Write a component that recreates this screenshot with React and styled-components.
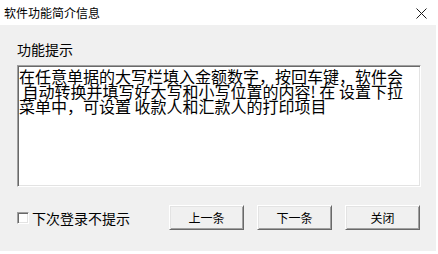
import React from 'react';
import styled, { createGlobalStyle } from 'styled-components';

const GlobalStyle = createGlobalStyle`
  html, body {
    margin: 0;
    padding: 0;
    background: #ffffff;
  }
  body {
    font-family: "Noto Sans CJK SC", "Noto Sans", sans-serif;
    color: #000;
  }
`;

const Window = styled.div`
  width: 436px;
  height: 251px;
  display: flex;
  flex-direction: column;
  background: #f0f0f0;
`;

const TitleBar = styled.div`
  height: 25px;
  flex: none;
  display: flex;
  align-items: center;
  justify-content: space-between;
  padding: 0 9px 0 4px;
  background: #ffffff;
`;

const Title = styled.span`
  font-size: 12px;
  line-height: 14px;
  margin-top: 1px;
`;

const CloseIcon = styled.svg`
  width: 11px;
  height: 11px;
  margin-top: 2px;
`;

const Body = styled.div`
  flex: 1;
  display: flex;
  flex-direction: column;
  padding: 16px 15px 0 17px;
`;

const Label = styled.div`
  font-size: 14px;
  line-height: 16px;
  margin-bottom: 8px;
`;

const TextBox = styled.div`
  height: 122px;
  box-sizing: border-box;
  background: #ffffff;
  border: 1px solid;
  border-color: #a0a0a0 #ffffff #ffffff #a0a0a0;
  box-shadow: inset 1px 1px #696969, inset -1px -1px #e3e3e3;
  padding: 3px 0 0 1px;
  overflow: hidden;
`;

const Line = styled.div`
  font-size: 16px;
  line-height: 15px;
  white-space: pre;
`;

const Footer = styled.div`
  display: flex;
  align-items: center;
  margin-top: 18px;
`;

const CheckRow = styled.label`
  display: flex;
  align-items: center;
  gap: 3px;
  font-size: 14px;
  line-height: 16px;
`;

const CheckBox = styled.span`
  width: 12px;
  height: 12px;
  box-sizing: border-box;
  background: #ffffff;
  border: 1px solid;
  border-color: #a0a0a0 #ffffff #ffffff #a0a0a0;
  box-shadow: inset 1px 1px #696969, inset -1px -1px #e3e3e3;
`;

const Buttons = styled.div`
  margin-left: auto;
  margin-right: 1px;
  display: flex;
  gap: 13px;
`;

const Button = styled.button`
  width: 75px;
  height: 25px;
  box-sizing: border-box;
  padding: 0;
  font-family: inherit;
  font-size: 12px;
  color: #000;
  background: #f0f0f0;
  border: 1px solid;
  border-color: #ffffff #696969 #696969 #ffffff;
  box-shadow: inset 1px 1px #e3e3e3, inset -1px -1px #a0a0a0;
  border-radius: 0;
`;

const lines = [
  '在任意单据的大写栏填入金额数字，按回车键，软件会',
  ' 自动转换并填写好大写和小写位置的内容! 在 设置下拉',
  '菜单中，可设置 收款人和汇款人的打印项目',
];

export default function App() {
  return (
    <>
      <GlobalStyle />
      <Window>
        <TitleBar>
          <Title>软件功能简介信息</Title>
          <CloseIcon viewBox="0 0 11 11">
            <path d="M0.5 0.5 L10.5 10.5 M10.5 0.5 L0.5 10.5" stroke="#1a1a1a" strokeWidth="1" fill="none" />
          </CloseIcon>
        </TitleBar>
        <Body>
          <Label>功能提示</Label>
          <TextBox>
            {lines.map((t, i) => (
              <Line key={i}>{t}</Line>
            ))}
          </TextBox>
          <Footer>
            <CheckRow>
              <CheckBox />
              下次登录不提示
            </CheckRow>
            <Buttons>
              <Button>上一条</Button>
              <Button>下一条</Button>
              <Button>关闭</Button>
            </Buttons>
          </Footer>
        </Body>
      </Window>
    </>
  );
}
